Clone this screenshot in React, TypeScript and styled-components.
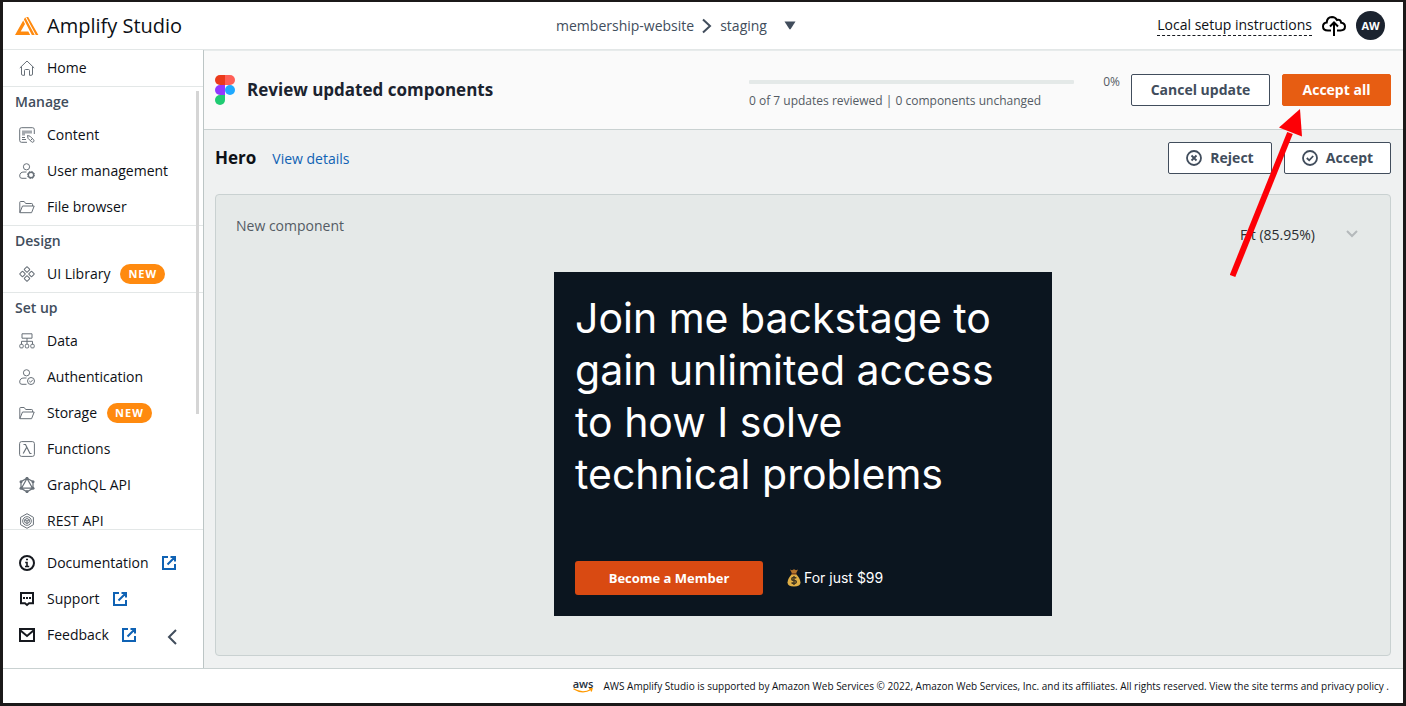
import React from "react";
import styled, { createGlobalStyle } from "styled-components";

const sans = `"Open Sans", "Noto Sans", sans-serif`;

const GlobalStyle = createGlobalStyle`
  *, *::before, *::after { box-sizing: border-box; }
  body { margin: 0; background: #1b1919; font-family: ${sans}; color: #0d1016; }
  h1, h2, h3, p, ul { margin: 0; padding: 0; }
  ul { list-style: none; }
  a { color: inherit; text-decoration: none; }
  button, select { font-family: inherit; color: inherit; cursor: pointer; }
  svg { display: block; flex: none; }
`;

const Frame = styled.div`
  position: relative;
  height: 100vh;
  padding: 2px 3px 3px;
  display: flex;
`;

const Shell = styled.div`
  flex: 1;
  min-width: 0;
  display: flex;
  flex-direction: column;
  background: #fff;
`;

const Header = styled.header`
  display: grid;
  grid-template-columns: 1fr auto 1fr;
  align-items: center;
  height: 48px;
  flex: none;
  padding: 0 18px 0 12px;
  border-bottom: 1px solid #e3e7e7;
`;

const Brand = styled.a`
  display: flex;
  align-items: center;
  gap: 8px;
  font-size: 20px;
  font-weight: 500;
  line-height: 28px;
`;

const Breadcrumb = styled.nav`
  display: flex;
  align-items: center;
  gap: 8px;
  padding-right: 48px;
  font-size: 14px;
  font-weight: 500;
  line-height: 20px;
  color: #414d5c;
`;

const PlainButton = styled.button`
  display: flex;
  align-items: center;
  padding: 0;
  border: 0;
  background: none;
`;

const EnvButton = styled(PlainButton)`
  padding-left: 9px;
`;

const HeaderTools = styled.div`
  display: flex;
  justify-content: flex-end;
  align-items: center;
  gap: 10px;
`;

const SetupLink = styled.a`
  font-size: 14px;
  font-weight: 500;
  line-height: 20px;
  border-bottom: 1px dashed #16191f;
`;

const Avatar = styled.button`
  width: 29px;
  height: 29px;
  padding: 0;
  border: 0;
  border-radius: 50%;
  background: #1b232f;
  color: #fff;
  font-size: 11px;
  font-weight: 700;
`;

const Body = styled.div`
  flex: 1;
  min-height: 0;
  display: flex;
`;

const Sidebar = styled.aside`
  width: 201px;
  flex: none;
  display: flex;
  flex-direction: column;
  border-right: 1px solid #bcc5c5;
`;

const NavScroller = styled.div`
  position: relative;
  flex: 1;
  min-height: 0;
  overflow: hidden;
  border-bottom: 1px solid #e3e7e7;
`;

const ScrollThumb = styled.span`
  position: absolute;
  top: 4px;
  right: 4px;
  width: 3px;
  height: 73%;
  background: #d5d5d5;
`;

const NavSection = styled.section`
  border-bottom: 1px solid #e3e7e7;
`;

const NavHeading = styled.h2`
  padding-left: 12px;
  font-size: 14px;
  font-weight: 600;
  line-height: 30px;
  color: #414d5c;
`;

const NavLink = styled.a`
  display: flex;
  align-items: center;
  gap: 12px;
  height: 36px;
  padding-left: 16px;
  font-size: 14px;
  font-weight: 500;
  line-height: 20px;
  svg { color: #687078; }
`;

const HelpLink = styled(NavLink)`
  svg { color: #16191f; }
  svg:last-child { color: #0f62b4; }
`;

const NewBadge = styled.span`
  padding: 0 8px;
  border-radius: 10px;
  background: #ff8a0f;
  color: #fff;
  font-size: 11px;
  font-weight: 700;
  line-height: 20px;
  letter-spacing: 1px;
  margin-left: -2px;
`;

const HelpNav = styled.nav`
  position: relative;
  padding: 15px 0;
`;

const CollapseButton = styled(PlainButton)`
  position: absolute;
  right: 26px;
  bottom: 23px;
  color: #414d5c;
`;

const Main = styled.main`
  flex: 1;
  min-width: 0;
  display: flex;
  flex-direction: column;
  overflow: auto;
  background: #eff1f1;
`;

const ReviewBar = styled.div`
  display: flex;
  align-items: flex-start;
  padding: 23px 12px 20px 11px;
  background: #fafafa;
  border-top: 1px solid #e7ebeb;
  border-bottom: 1px solid #c9d1d1;
`;

const ReviewTitle = styled.h1`
  flex: 1;
  display: flex;
  align-items: center;
  gap: 12px;
  font-size: 17px;
  font-weight: 700;
  line-height: 32px;
  color: #1b232f;
`;

const ProgressGroup = styled.div`
  width: 325px;
  padding-top: 6px;
  font-size: 12px;
  font-weight: 500;
  line-height: 16px;
  color: #545b64;
`;

const Track = styled.div`
  height: 4px;
  margin-bottom: 9px;
  border-radius: 1px;
  background: #e4e9e8;
`;

const Percent = styled.span`
  width: 46px;
  margin-right: 11px;
  text-align: right;
  font-size: 12px;
  font-weight: 500;
  line-height: 16px;
  color: #545b64;
`;

const ButtonRow = styled.div`
  display: flex;
  gap: 12px;
`;

const Button = styled.button<{ $primary?: boolean; $width: number }>`
  display: flex;
  align-items: center;
  justify-content: center;
  gap: 8px;
  min-width: ${(p) => p.$width}px;
  height: 32px;
  padding: 0;
  border: 1px solid ${(p) => (p.$primary ? "#e75d12" : "#414d5c")};
  border-radius: 2px;
  background: ${(p) => (p.$primary ? "#e75d12" : "#fff")};
  color: ${(p) => (p.$primary ? "#fff" : "#414d5c")};
  font-size: 14px;
  font-weight: 700;
  line-height: 20px;
`;

const ComponentReview = styled.section`
  flex: 1;
  display: flex;
  flex-direction: column;
  padding: 12px 12px 12px 11px;
`;

const ComponentHead = styled.div`
  display: flex;
  align-items: center;
  margin-bottom: 20px;
`;

const ComponentLabel = styled.div`
  flex: 1;
  display: flex;
  align-items: baseline;
  gap: 16px;
`;

const ComponentName = styled.h2`
  font-size: 17px;
  font-weight: 700;
  line-height: 32px;
`;

const DetailsLink = styled.a`
  font-size: 14px;
  font-weight: 500;
  line-height: 20px;
  color: #0f62b4;
`;

const Panel = styled.div`
  flex: 1;
  padding: 20px;
  border: 1px solid #c9d1d1;
  border-radius: 4px;
  background: #e5e9e8;
`;

const PanelHead = styled.div`
  display: flex;
  justify-content: space-between;
  align-items: flex-start;
  margin-bottom: 19px;
  font-size: 14px;
  font-weight: 500;
  line-height: 22px;
  color: #545b64;
`;

const ZoomField = styled.label`
  display: flex;
  align-items: center;
  width: 130px;
  height: 38px;
  color: #b4b9bb;
`;

const ZoomSelect = styled.select`
  flex: 1;
  min-width: 0;
  height: 22px;
  padding: 0;
  border: 0;
  appearance: none;
  background: none;
  font-size: 14px;
  font-weight: 500;
  color: #2b2d30;
`;

const ChevronSlot = styled.span`
  padding-right: 12px;
`;

const HeroCard = styled.article`
  display: flex;
  flex-direction: column;
  justify-content: space-between;
  width: 498px;
  min-height: 344px;
  margin: 0 auto;
  padding: 20px 21px 21px;
  background: #0b151f;
  color: #fff;
  font-family: Inter, sans-serif;
`;

const HeroTitle = styled.h3`
  max-width: 440px;
  font-size: 41px;
  font-weight: 400;
  line-height: 52px;
`;

const HeroActions = styled.div`
  display: flex;
  align-items: center;
  gap: 24px;
`;

const JoinButton = styled.button`
  width: 188px;
  height: 34px;
  padding: 0;
  border: 0;
  border-radius: 3px;
  background: #d94a12;
  color: #fff;
  font-family: ${sans};
  font-size: 13px;
  font-weight: 700;
`;

const Price = styled.p`
  display: flex;
  align-items: center;
  gap: 3px;
  font-size: 14px;
  line-height: 20px;
`;

const Footer = styled.footer`
  display: flex;
  align-items: center;
  justify-content: flex-end;
  gap: 10px;
  height: 35px;
  flex: none;
  padding-right: 14px;
  border-top: 1px solid #c9d1d1;
  font-size: 10px;
  font-weight: 500;
  line-height: 16px;
`;

const AwsMark = styled.span`
  display: flex;
  flex-direction: column;
  align-items: center;
  font-size: 11px;
  font-weight: 600;
  line-height: 9px;
  color: #252f3e;
`;

const Pointer = styled.svg`
  position: absolute;
  top: 106px;
  right: 100px;
  pointer-events: none;
`;

type IconProps = { children: React.ReactNode; size?: number; stroke?: number };
const Icon = ({ children, size = 16, stroke = 1 }: IconProps) => (
  <svg width={size} height={size} viewBox="0 0 16 16" fill="none" stroke="currentColor" strokeWidth={stroke} aria-hidden="true">
    {children}
  </svg>
);

const HomeIcon = () => (
  <Icon>
    <path d="M.8 8 8 1l7.200 7M2.500 6.500V14q0 1.300 1.300 1.300H5.500V10.500q0-1 1-1h3q1 0 1 1v4.800h1.700q1.300 0 1.300-1.300V6.500" />
  </Icon>
);
const ContentIcon = () => (
  <Icon>
    <path d="M15.300 7V2.500Q15.300.7 13.500.7h-11Q.7.700.7 2.500v11q0 1.800 1.800 1.800H8" />
    <path d="M3 3.500h10v3H6v2H3z" fill="currentColor" stroke="none" opacity=".6" />
    <path d="M3 10.500h3M3 12.500h4M8.500 8.500l.5 2.800 3.700 3.700q1 .7 1.900-.2t.1-1.900L11 9.200zM13.500 11.500l-2 2" />
  </Icon>
);
const UserGearIcon = () => (
  <Icon>
    <circle cx="7.500" cy="3.800" r="3.100" />
    <path d="M7.500 15.300H3q-2.300 0-2.300-2.200Q.7 9 5 9h2.500" />
    <circle cx="12" cy="12" r="2.700" strokeWidth="1.400" />
    <circle cx="12" cy="12" r="3.600" strokeDasharray="1.400 1.430" />
  </Icon>
);
const UserCheckIcon = () => (
  <Icon>
    <circle cx="7.500" cy="3.800" r="3.100" />
    <path d="M7.500 15.300H3q-2.300 0-2.300-2.200Q.7 9 5 9h2.500" />
    <circle cx="12" cy="12" r="3.500" />
    <path d="m10.300 12 1.300 1.200 2.200-2.400" />
  </Icon>
);
const FolderIcon = () => (
  <Icon>
    <path d="M.8 13.500V3.200q0-.7.7-.7h3.700l1.500 2h6q.8 0 .8.800V7M.8 13.700 3.500 7h11.700l-2.600 6.700z" />
  </Icon>
);
const LibraryIcon = () => (
  <Icon>
    {[[8, 3.500], [3.500, 8], [12.500, 8], [8, 12.500]].map(([x, y]) => (
      <rect key={`${x}-${y}`} x={x - 2} y={y - 2} width="4" height="4" rx=".4" transform={`rotate(45 ${x} ${y})`} />
    ))}
  </Icon>
);
const DataIcon = () => (
  <Icon>
    <path d="M3 .8h10v4.400H3zM8 5.200v6M2.500 11V8.300h11V11" />
    <rect x=".8" y="11.300" width="3.400" height="3.600" rx="1" />
    <rect x="6.300" y="11.300" width="3.400" height="3.600" rx="1" />
    <rect x="11.800" y="11.300" width="3.400" height="3.600" rx="1" />
  </Icon>
);
const LambdaIcon = () => (
  <Icon>
    <rect x=".6" y=".6" width="14.800" height="14.800" rx="2" />
    <path d="M4.500 3.500h2l4.500 9h1.500M7.700 6.300l-3.500 6.200" strokeWidth="1.200" />
  </Icon>
);
const GraphqlIcon = () => (
  <Icon>
    <path d="m8 1.200 6 3.500v6.600l-6 3.500-6-3.500V4.700zM8 1.500 2.500 11.200h11z" strokeWidth="1.200" />
    {[[8, 1.400], [14, 4.700], [14, 11.300], [8, 14.600], [2, 11.300], [2, 4.700]].map(([x, y]) => (
      <circle key={`${x}-${y}`} cx={x} cy={y} r="1.500" fill="currentColor" stroke="none" />
    ))}
  </Icon>
);
const RestIcon = () => (
  <Icon>
    <path d="m8 .7 6.400 3.600v7.400L8 15.300l-6.400-3.600V4.300z" />
    <circle cx="8" cy="8" r="4.300" />
    <path d="m8 5.500 2.300 1.200v2.600L8 10.500 5.700 9.300V6.700zM5.700 6.700 8 8l2.300-1.300M8 8v2.500" />
  </Icon>
);
const InfoIcon = () => (
  <Icon stroke={2}>
    <circle cx="8" cy="8" r="7" />
    <path d="M7 4.500h2M6.200 7.500H8v4M6 11.500h4.200" strokeWidth="1.600" />
  </Icon>
);
const ChatIcon = () => (
  <Icon stroke={2}>
    <path d="M2 2h12v10.300h-4L8 14l-2-1.700H2z" />
    <path d="M4 7h2M7 7h2M10 7h2" />
  </Icon>
);
const MailIcon = () => (
  <Icon stroke={2}>
    <path d="M1 2h14v12H1zM1.500 3.500 8 9l6.500-5.500" />
  </Icon>
);
const ExternalIcon = () => (
  <Icon stroke={2}>
    <path d="M7 2H2v12h12V9M9.500 2H14v4.500M14 2 6.500 9.500" />
  </Icon>
);
const RejectIcon = () => (
  <Icon stroke={2}>
    <circle cx="8" cy="8" r="7" strokeWidth="1.800" />
    <path d="m5.500 5.500 5 5m0-5-5 5" strokeWidth="1.800" />
  </Icon>
);
const AcceptIcon = () => (
  <Icon stroke={2}>
    <circle cx="8" cy="8" r="7" strokeWidth="1.800" />
    <path d="m4.800 8 2.400 2.300 4-4.300" strokeWidth="1.800" />
  </Icon>
);
const AmplifyLogo = () => (
  <svg width="24" height="20" viewBox="0 0 24 20" fill="#ff8a0f" aria-hidden="true">
    <path d="M8.200 4.600 10 7.900 5.700 15.600h7.600L15.200 19H0zM8.900 3.500 10.200 1.300 19.700 19H16.900zM11.200 1h2L23.400 19h-2.600z" />
  </svg>
);
const FigmaLogo = () => (
  <svg width="20" height="30" viewBox="0 0 20 30" aria-hidden="true">
    <path d="M10 0H5a5 5 0 0 0 0 10h5z" fill="#eb3a1b" />
    <path d="M10 0h5a5 5 0 0 1 0 10h-5z" fill="#ff5f57" />
    <path d="M10 10H5a5 5 0 0 0 0 10h5z" fill="#9238ff" />
    <circle cx="15" cy="15" r="5" fill="#1ea9ff" />
    <path d="M10 20H5a5 5 0 1 0 5 5z" fill="#1fcb72" />
  </svg>
);
const CloudUpIcon = () => (
  <svg width="24" height="20" viewBox="0 0 24 20" fill="none" stroke="#000" strokeWidth="2" aria-hidden="true">
    <path d="M9 14.500H6Q1 14.500 1 10.500q0-3.500 3.700-4Q5 1.200 10 1q3.300 0 5 3 3.500-1 4.200 2.800Q23 7.300 23 10.600q0 3.900-4.500 3.900H15M12 20V7M8 10.500 12 6.500l4 4" />
  </svg>
);
const MoneyBag = () => (
  <svg width="14" height="18" viewBox="0 0 14 18" aria-hidden="true">
    <path d="M3 .5 5 1.200 7 .3l2 .9 2-.7-2 4H5z" fill="#b5742c" />
    <path d="M5 5h4q4.500 4.500 4.500 8.500 0 4-6.500 4T.5 13.500Q.5 9.500 5 5z" fill="#dfae45" />
    <path d="M4.500 4.300h5v1.300h-5z" fill="#8a4b20" />
    <path d="M9.300 9.300Q8.500 8.400 7 8.400q-2.200 0-2.200 1.500T7 11.400t2.300 1.500T7 14.500q-1.700 0-2.400-1M7 7v9" fill="none" stroke="#3f3420" strokeWidth="1.400" />
  </svg>
);

type Item = { label: string; icon: React.ReactNode; isNew?: boolean };
const sections: { title: string; items: Item[] }[] = [
  {
    title: "Manage",
    items: [
      { label: "Content", icon: <ContentIcon /> },
      { label: "User management", icon: <UserGearIcon /> },
      { label: "File browser", icon: <FolderIcon /> },
    ],
  },
  { title: "Design", items: [{ label: "UI Library", icon: <LibraryIcon />, isNew: true }] },
  {
    title: "Set up",
    items: [
      { label: "Data", icon: <DataIcon /> },
      { label: "Authentication", icon: <UserCheckIcon /> },
      { label: "Storage", icon: <FolderIcon />, isNew: true },
      { label: "Functions", icon: <LambdaIcon /> },
      { label: "GraphQL API", icon: <GraphqlIcon /> },
      { label: "REST API", icon: <RestIcon /> },
    ],
  },
];
const helpLinks: Item[] = [
  { label: "Documentation", icon: <InfoIcon /> },
  { label: "Support", icon: <ChatIcon /> },
  { label: "Feedback", icon: <MailIcon /> },
];

export default function App() {
  return (
    <Frame>
      <GlobalStyle />
      <Shell>
        <Header>
          <Brand href="#">
            <AmplifyLogo />
            Amplify Studio
          </Brand>
          <Breadcrumb aria-label="Environment">
            <a href="#">membership-website</a>
            <svg width="10" height="16" viewBox="0 0 10 16" fill="none" stroke="currentColor" strokeWidth="2" aria-hidden="true">
              <path d="m1 1.500 7 6.500-7 6.500" />
            </svg>
            <a href="#">staging</a>
            <EnvButton aria-label="Switch environment">
              <svg width="12" height="9" viewBox="0 0 12 9" fill="#414d5c">
                <path d="M.5.500h11L6.700 8q-.7.800-1.400 0z" />
              </svg>
            </EnvButton>
          </Breadcrumb>
          <HeaderTools>
            <SetupLink href="#">Local setup instructions</SetupLink>
            <PlainButton aria-label="Upload status">
              <CloudUpIcon />
            </PlainButton>
            <Avatar>AW</Avatar>
          </HeaderTools>
        </Header>

        <Body>
          <Sidebar>
            <NavSection>
              <NavLink href="#">
                <HomeIcon />
                Home
              </NavLink>
            </NavSection>
            <NavScroller>
              {sections.map((section) => (
                <NavSection key={section.title}>
                  <NavHeading>{section.title}</NavHeading>
                  {section.items.map((item) => (
                    <NavLink href="#" key={item.label}>
                      {item.icon}
                      {item.label}
                      {item.isNew && <NewBadge>NEW</NewBadge>}
                    </NavLink>
                  ))}
                </NavSection>
              ))}
              <ScrollThumb />
            </NavScroller>
            <HelpNav aria-label="Help">
              {helpLinks.map((item) => (
                <HelpLink href="#" key={item.label}>
                  {item.icon}
                  {item.label}
                  <ExternalIcon />
                </HelpLink>
              ))}
              <CollapseButton aria-label="Collapse navigation">
                <svg width="10" height="16" viewBox="0 0 10 16" fill="none" stroke="currentColor" strokeWidth="2">
                  <path d="M9 1 2 8l7 7" />
                </svg>
              </CollapseButton>
            </HelpNav>
          </Sidebar>

          <Main>
            <ReviewBar>
              <ReviewTitle>
                <FigmaLogo />
                Review updated components
              </ReviewTitle>
              <ProgressGroup>
                <Track role="progressbar" aria-label="Updates reviewed" aria-valuenow={0} aria-valuemin={0} aria-valuemax={7} />
                <p>0 of 7 updates reviewed | 0 components unchanged</p>
              </ProgressGroup>
              <Percent>0%</Percent>
              <ButtonRow>
                <Button $width={139}>Cancel update</Button>
                <Button $width={109} $primary>
                  Accept all
                </Button>
              </ButtonRow>
            </ReviewBar>

            <ComponentReview>
              <ComponentHead>
                <ComponentLabel>
                  <ComponentName>Hero</ComponentName>
                  <DetailsLink href="#">View details</DetailsLink>
                </ComponentLabel>
                <ButtonRow>
                  <Button $width={104}>
                    <RejectIcon />
                    Reject
                  </Button>
                  <Button $width={107}>
                    <AcceptIcon />
                    Accept
                  </Button>
                </ButtonRow>
              </ComponentHead>
              <Panel>
                <PanelHead>
                  <p>New component</p>
                  <ZoomField>
                    <ZoomSelect aria-label="Preview zoom" defaultValue="fit">
                      <option value="fit">Fit (85.95%)</option>
                    </ZoomSelect>
                    <ChevronSlot>
                      <svg width="12" height="8" viewBox="0 0 12 8" fill="none" stroke="currentColor" strokeWidth="2">
                        <path d="m1 1 5 5 5-5" />
                      </svg>
                    </ChevronSlot>
                  </ZoomField>
                </PanelHead>
                <HeroCard>
                  <HeroTitle>Join me backstage to gain unlimited access to how I solve technical problems</HeroTitle>
                  <HeroActions>
                    <JoinButton>Become a Member</JoinButton>
                    <Price>
                      <MoneyBag />
                      For just $99
                    </Price>
                  </HeroActions>
                </HeroCard>
              </Panel>
            </ComponentReview>
          </Main>
        </Body>

        <Footer>
          <AwsMark>
            aws
            <svg width="20" height="5" viewBox="0 0 20 5" fill="none" stroke="#ff9900" strokeWidth="1.300" aria-hidden="true">
              <path d="M.5.800Q9.500 6.500 18 1.500M16 .7h3l-.8 2.800" />
            </svg>
          </AwsMark>
          <p>
            AWS Amplify Studio is supported by Amazon Web Services © 2022, Amazon Web Services, Inc. and its affiliates. All
            rights reserved. View the <a href="#">site terms</a> and <a href="#">privacy policy</a> .
          </p>
        </Footer>
      </Shell>
      <Pointer width="76" height="174" viewBox="0 0 76 174" aria-hidden="true">
        <path d="M2.500 170 60 27" stroke="#fd0006" strokeWidth="6" />
        <path d="M70 3 49 21.500 72 30.500z" fill="#fd0006" />
      </Pointer>
    </Frame>
  );
}
